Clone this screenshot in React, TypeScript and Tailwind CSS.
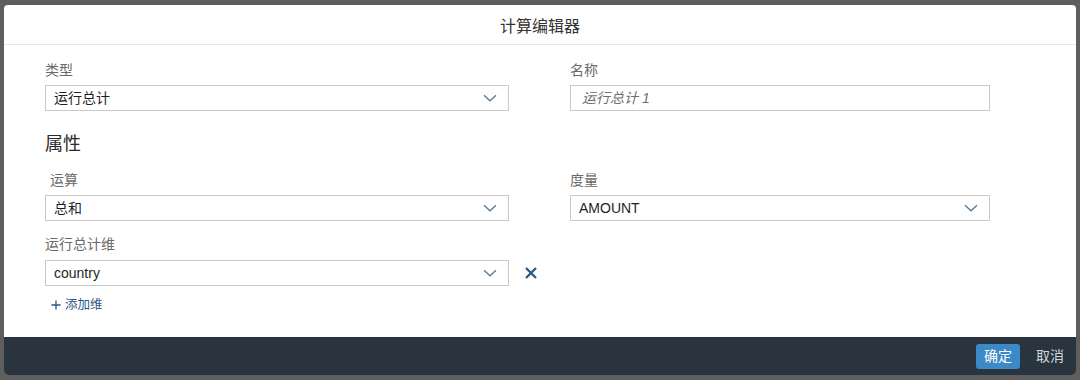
import { Plus } from "lucide-react"

const font = { fontFamily: '"Liberation Sans", "Noto Sans CJK SC", sans-serif' }

function Chevron() {
  return (
    <svg width="14" height="8" viewBox="0 0 14 8" fill="none" className="text-[#56789a]">
      <path d="M1 1.2 7 6.8 13 1.2" stroke="currentColor" strokeWidth="1.3" />
    </svg>
  )
}

function Select({ value, className = "" }: { value: string; className?: string }) {
  return (
    <div
      className={`flex h-[26px] items-center justify-between border border-[#c9c9c9] bg-white pl-[8px] pr-[11px] ${className}`}
    >
      <span className="text-[14px] leading-none text-[#1f1f1f]">{value}</span>
      <Chevron />
    </div>
  )
}

function Label({ children, className = "" }: { children: React.ReactNode; className?: string }) {
  return <div className={`h-[20px] text-[14px] leading-[20px] text-[#6a6a6a] ${className}`}>{children}</div>
}

export default function App() {
  return (
    <div className="h-[380px] w-[1080px] overflow-hidden bg-[#5e5e5e] px-[4px] pt-[5px]" style={font}>
      <div className="flex h-[370px] flex-col overflow-hidden rounded-[4px] bg-white">
        {/* Header */}
        <div className="flex h-[40px] shrink-0 items-center justify-center border-b border-[#e6e6e6] pt-[4px]">
          <span className="text-[16px] text-[#333]">计算编辑器</span>
        </div>

        {/* Body */}
        <div className="flex flex-1 flex-col pl-[41px] pt-[15px]">
          <div className="flex gap-[61px]">
            <div className="w-[464px]">
              <Label>类型</Label>
              <Select value="运行总计" className="mt-[5px]" />
            </div>
            <div className="w-[420px]">
              <Label>名称</Label>
              <div className="mt-[5px] flex h-[26px] items-center border border-[#c9c9c9] pl-[11px]">
                <span className="text-[14px] italic leading-none text-[#6f6f6f]">运行总计 1</span>
              </div>
            </div>
          </div>

          <div className="mt-[21px] h-[24px] text-[18px] leading-[24px] text-[#2a2a2a]">属性</div>

          <div className="mt-[14px] flex gap-[61px]">
            <div className="w-[464px]">
              <Label className="pl-[5px]">运算</Label>
              <Select value="总和" className="mt-[5px]" />
            </div>
            <div className="w-[420px]">
              <Label>度量</Label>
              <Select value="AMOUNT" className="mt-[5px]" />
            </div>
          </div>

          <Label className="mt-[13px]">运行总计维</Label>
          <div className="mt-[6px] flex items-center">
            <Select value="country" className="w-[464px]" />
            <svg width="12" height="12" viewBox="0 0 12 12" className="ml-[16px] text-[#2b5a84]">
              <path d="M1 1 11 11M11 1 1 11" stroke="currentColor" strokeWidth="2.4" />
            </svg>
          </div>

          <div className="mt-[10px] flex items-center gap-[2px] pl-[4px] text-[12.5px] leading-[18px] text-[#2a5985]">
            <Plus className="size-[14px]" strokeWidth={2.2} />
            <span>添加维</span>
          </div>
        </div>

        {/* Footer */}
        <div className="flex h-[38px] shrink-0 items-center justify-end gap-[16px] bg-[#29343e] pr-[12px]">
          <button className="h-[25px] rounded-[3px] bg-[#3b89c6] px-[8px] text-[14px] leading-none text-white">
            确定
          </button>
          <span className="text-[14px] text-[#cfd6dd]">取消</span>
        </div>
      </div>
    </div>
  )
}
